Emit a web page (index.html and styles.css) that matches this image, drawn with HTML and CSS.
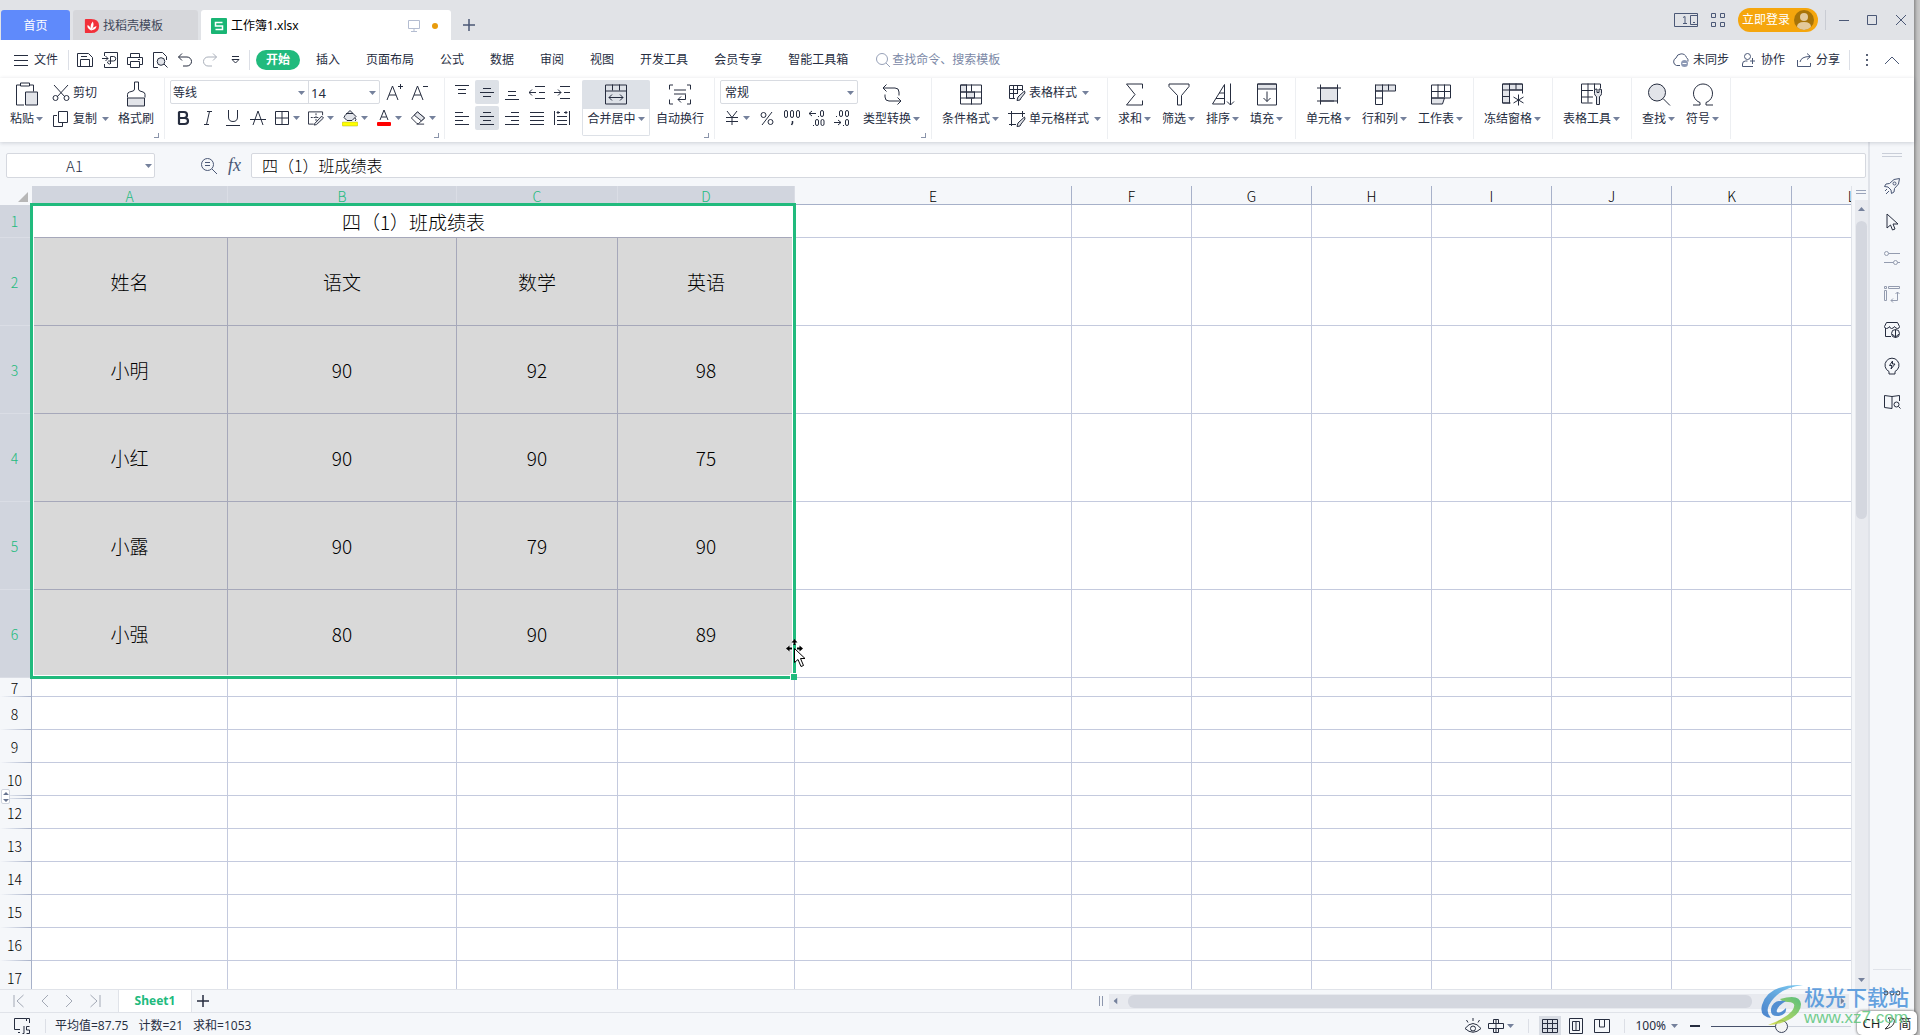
FILE: index.html
```html
<!DOCTYPE html>
<html lang="zh-CN">
<head>
<meta charset="utf-8">
<title>工作簿1.xlsx</title>
<link rel="stylesheet" href="styles.css">
</head>
<body>
<svg class="sprite" aria-hidden="true">
  <symbol id="caret" viewBox="0 0 7 4"><path d="M0 0h7L3.500 4z" fill="currentColor" stroke="none"/></symbol>
  <symbol id="menu" viewBox="0 0 16 16"><path d="M1 3.500h14M1 8.500h14M1 13.500h14"/></symbol>
  <symbol id="save" viewBox="0 0 16 16"><path d="M.5 1.500h11l4 4v9H.5zM3.500 14v-6.500h9V14M4 4.500h6"/></symbol>
  <symbol id="export" viewBox="0 0 16 16"><path d="M2.500 4V.5h13v15h-13V12M0 6.500h6M3.500 4 6 6.500 3.500 9M8.500 12V4.500h3a2 2 0 0 1 0 4.500H6.500a1.500 1.500 0 1 0 2 2"/></symbol>
  <symbol id="print" viewBox="0 0 16 16"><path d="M3.500 5V1.500h9V5M3.500 12.500h-3v-7h15v7h-3M3.500 9.500h9v6h-9zM11 7.500h2"/></symbol>
  <symbol id="preview" viewBox="0 0 16 16"><path d="M6 15.500H1.500V.5h9l4 4V8"/><circle cx="9" cy="9.500" r="3.800" fill="#e2e4e9"/><path d="m12 12 3.500 3.500"/></symbol>
  <symbol id="undo" viewBox="0 0 16 16"><path d="M5 1.500 1.500 5 5 8.500M1.500 5H10a4.500 4.500 0 0 1 0 9H6"/></symbol>
  <symbol id="redo" viewBox="0 0 16 16"><path d="M11 1.500 14.500 5 11 8.500M14.500 5H6a4.500 4.500 0 0 0 0 9h4"/></symbol>
  <symbol id="more" viewBox="0 0 9 8"><path d="M1 .5h7M1 3.500h7L4.500 7z"/></symbol>
  <symbol id="search" viewBox="0 0 16 16"><circle cx="7" cy="7" r="5.500"/><path d="m11 11 4 4"/></symbol>
  <symbol id="paste" viewBox="0 0 22 24"><path d="M8 22.500H.5v-20h4M13.500 2.500h4V9M4.500.5h9v3h-9z"/><path d="M9.500 9.500h12v13h-12z" fill="#e2e4e9"/></symbol>
  <symbol id="cut" viewBox="0 0 18 18"><path d="m2 1 11 12M16 1 5 13"/><circle cx="3.500" cy="14" r="2.500"/><circle cx="14.500" cy="14" r="2.500"/></symbol>
  <symbol id="copy" viewBox="0 0 18 18"><path d="M5 5.500H1.500v11h9V13M6.500 1.500h9v11h-9z"/></symbol>
  <symbol id="brush" viewBox="0 0 20 26"><path d="M1.500 16v-3q0-2 2-2.500l3.500-1q1.500-.5 1.500-2V.5h4v7q0 1.500 1.500 2l3 1q2 .5 2 2.500v3"/><path d="M1.500 16.500h17v8h-17z" fill="#e2e4e9"/></symbol>
  <symbol id="biga" viewBox="0 0 18 18"><path d="M1 17 6.500 3 12 17M3 12h7M14.500 1v5M12 3.500h5"/></symbol>
  <symbol id="smalla" viewBox="0 0 18 18"><path d="M1 17 6.500 3 12 17M3 12h7M12 3.500h5"/></symbol>
  <symbol id="bold" viewBox="0 0 16 16"><path d="M4 2v12M3.500 2H9q3 0 3 3t-3 3H4h5.500q3.500 0 3.500 3t-3.500 3h-6" stroke-width="2.200"/></symbol>
  <symbol id="italic" viewBox="0 0 16 16"><path d="M7 1.500h5M4 14.500h5M9.500 1.500l-3 13"/></symbol>
  <symbol id="under" viewBox="0 0 16 16"><path d="M3.500 0v7q0 4.500 4.500 4.500T12.500 7V0M1 15.500h14"/></symbol>
  <symbol id="strike" viewBox="0 0 16 16"><path d="M3 15 8 1l5 14M0 9.500h16"/></symbol>
  <symbol id="borders" viewBox="0 0 16 16"><path d="M1.500 1.500h13v13h-13zM8 1v14M1 8h14"/></symbol>
  <symbol id="drawb" viewBox="0 0 17 16"><path d="M15.500 5V1.500h-15v13H6"/><path d="M8.500 3v8M3 7.500h8" stroke-dasharray="2 1"/><path d="m7 14 7.500-8 2 2L9 15l-2.500.5z" fill="#e2e4e9"/></symbol>
  <symbol id="fill" viewBox="0 0 16 18"><path d="M3 6.500 8 1.500l6 6-4 4H5l-3-3z" fill="#e2e4e9"/><path d="M4 4.500h7M13 9q2 2 0 3"/><rect y="13" width="16" height="4" rx="1" fill="#ff0" stroke="#a9a93a" stroke-width=".5"/></symbol>
  <symbol id="color" viewBox="0 0 16 18"><path d="m4 11 4-10 4 10M5.500 8h5"/><rect x="1" y="13" width="14" height="4" rx="1" fill="#f00" stroke="none"/></symbol>
  <symbol id="eraser" viewBox="0 0 17 16"><path d="M8 1.500 1.500 8l6 6H9l6.500-6z"/><path d="M8 1.500 15.500 8 12 11 4.500 5z" fill="#e2e4e9"/><path d="M7 14.500h8"/></symbol>
  <symbol id="vtop" viewBox="0 0 16 16"><path d="M1 1.500h14M4 5.500h8M4 9.500h8"/></symbol>
  <symbol id="vmid" viewBox="0 0 16 16"><path d="M4 4.500h8M1 8.500h14M4 12.500h8"/></symbol>
  <symbol id="vbot" viewBox="0 0 16 16"><path d="M4 7.500h8M4 11.500h8M1 15.500h14"/></symbol>
  <symbol id="outdent" viewBox="0 0 16 16"><path d="M6 2.500h10M10 8.500h6M6 14.500h10M0 8.500h7M3 5.500l-3 3 3 3"/></symbol>
  <symbol id="indent" viewBox="0 0 16 16"><path d="M6 2.500h10M10 8.500h6M6 14.500h10M0 8.500h7M4 5.500l3 3-3 3"/></symbol>
  <symbol id="left" viewBox="0 0 16 16"><path d="M1 2.500h8M1 6.500h14M1 10.500h8M1 14.500h14"/></symbol>
  <symbol id="center" viewBox="0 0 16 16"><path d="M4 2.500h8M1 6.500h14M4 10.500h8M1 14.500h14"/></symbol>
  <symbol id="right" viewBox="0 0 16 16"><path d="M7 2.500h8M1 6.500h14M7 10.500h8M1 14.500h14"/></symbol>
  <symbol id="justify" viewBox="0 0 16 16"><path d="M1 2.500h14M1 6.500h14M1 10.500h14M1 14.500h14"/></symbol>
  <symbol id="distribute" viewBox="0 0 16 16"><path d="M.5 1v14M15.500 1v14M3 6.500h10M3 10.500h10M3 14.500h10M3 2.500h3M10 2.500h3M4.500 1 3 2.500 4.500 4M11.500 1 13 2.500 11.500 4"/></symbol>
  <symbol id="merge" viewBox="0 0 24 22"><path d="M1.500 1.500h21v19h-21zM1 7.500h22M8.500 1v6M15.500 1v6M5 14h14M8 11l-3 3 3 3M16 11l3 3-3 3"/></symbol>
  <symbol id="wrap" viewBox="0 0 24 22"><path d="M5 1.500H1.500V6M19 1.500h3.500V6M1.500 16v4.500H5M22.500 16v4.500H19M6 6.500h12M6 10.500h12M17.500 11v5H10M13 13l-3 3 3 3"/></symbol>
  <symbol id="yuan" viewBox="0 0 16 16"><path d="m3 1 5 6.500L13 1M8 7v8M2 7.500h12M2 11.500h12"/></symbol>
  <symbol id="percent" viewBox="0 0 16 16"><circle cx="4.500" cy="5" r="2.500"/><circle cx="11.500" cy="12" r="2.500"/><path d="M13 2 3 15"/></symbol>
  <symbol id="thousand" viewBox="0 0 18 18"><rect x="1.500" y="1.500" width="3" height="7" rx="1.500"/><rect x="7.500" y="1.500" width="3" height="7" rx="1.500"/><rect x="13.500" y="1.500" width="3" height="7" rx="1.500"/><path d="M9.500 12v2l-1 2" stroke-width="1.500"/></symbol>
  <symbol id="lessdec" viewBox="0 0 18 18"><path d="M1 4.500h7M4 2 1 4.500 4 7M10 7.500h1M5 16.500h1"/><rect x="12.500" y="1.500" width="3" height="6" rx="1.500"/><rect x="7.500" y="10.500" width="3" height="6" rx="1.500"/><rect x="13" y="10.500" width="3" height="6" rx="1.500"/></symbol>
  <symbol id="moredec" viewBox="0 0 18 18"><path d="M1 13.500h7M5 11l3 2.500L5 16M3 7.500h1M10 16.500h1"/><rect x="6.500" y="1.500" width="3" height="6" rx="1.500"/><rect x="12.500" y="1.500" width="3" height="6" rx="1.500"/><rect x="12.500" y="10.500" width="3" height="6" rx="1.500"/></symbol>
  <symbol id="convert" viewBox="0 0 22 24"><path d="M2 5.500h12q4 0 4 4V13M5.500 2 2 5.500 5.500 9M20 18.500H8q-4 0-4-4V12M16.500 15l3.500 3.500-3.500 3.500"/></symbol>
  <symbol id="cond" viewBox="0 0 24 22"><path d="M1.500 1.500h6v7h-6zM7.500 8.500h8v6h-8z" fill="#e2e4e9"/><path d="M1.500 1.500h21v19h-21zM1 8.500h22M1 14.500h22M7.500 1v14M15.500 8v6M12.500 1v7M12.500 15v6"/></symbol>
  <symbol id="tstyle" viewBox="0 0 18 18"><path d="M14.500 7V1.500H1.500v13H7M1 5.500h14M1 9.500h9M5.500 1v13M9.500 1v9"/><path d="M16.500 7 11 12l-1 1-1 3.500 3-.5 1-2 4-5z" fill="#e2e4e9"/></symbol>
  <symbol id="cstyle" viewBox="0 0 18 18"><path d="M3.500 1v15M0 3.500h17M14.500 1v6M1 14.500h7"/><path d="M16.500 7 11 12l-1 1-1 3.500 3-.5 1-2 4-5z" fill="#e2e4e9"/></symbol>
  <symbol id="sum" viewBox="0 0 22 24"><path d="M18.500 6V1.500h-16L11 12l-8.500 10.500h16V18"/></symbol>
  <symbol id="filter" viewBox="0 0 22 24"><path d="M1 1.500h20V4l-7.500 9v9.500h-4V13L1 4z"/></symbol>
  <symbol id="sort" viewBox="0 0 24 24"><path d="M1.500 21.500 13.500 2v19.500zM5 16h8.500M8 10.500h5.500M19.500 1v21.500M16 19l3.500 3.500L23 19"/></symbol>
  <symbol id="fillin" viewBox="0 0 22 24"><path d="M1.500 1.500h19v5h-19z" fill="#e2e4e9"/><path d="M1.500 1.500h19v21h-19zM11 9v10M7.500 15.500 11 19l3.500-3.500"/></symbol>
  <symbol id="cells" viewBox="0 0 24 22"><path d="M3.500 4.500h17v13h-17z" fill="#e2e4e9"/><path d="M3.500 1v20M20.500 1v14M0 4.500h24M0 17.500h17M20.500 17v3"/></symbol>
  <symbol id="rowcol" viewBox="0 0 22 22"><path d="M1.500 1.500h20v6h-20z" fill="#e2e4e9"/><path d="M8.500 1v20h-7v-20M14.500 1v6M1 7.500h7M1 14.500h7"/></symbol>
  <symbol id="sheet" viewBox="0 0 22 22"><path d="M1.500 14.500h13l-2 6h-11z" fill="#e2e4e9"/><path d="M1.500 20V1.500h19v13h-19M1 8h19M8 1v13M14.500 1v13"/></symbol>
  <symbol id="freeze" viewBox="0 0 24 24"><path d="M1.500 1.500h20v6h-13v13h-7z" fill="#e2e4e9"/><path d="M21.500 11V1.500h-20v19h8M1 7.500h20M1 14h8M8.500 1v20M15 1v6M17.500 12v11M12.500 14.500l10 6M22.500 14.500l-10 6"/></symbol>
  <symbol id="ttool" viewBox="0 0 24 24"><path d="M20.500 6V1.500h-19v19h11M1 8h12M1 14.500h12M8 1v19M14.500 1v6"/><path d="M14.500 7v4q0 2 2 3v8h3v-8q2-1 2-3V7l-2.500-.5V10h-2V6.500z" fill="#e2e4e9"/></symbol>
  <symbol id="find" viewBox="0 0 24 24"><circle cx="10" cy="10" r="8.500" fill="#e2e4e9"/><path d="m16 16 7 7"/></symbol>
  <symbol id="omega" viewBox="0 0 24 24"><path d="M2 22.500h7V20a9.500 9.500 0 1 1 6 0v2.500h7"/></symbol>
  <symbol id="cloud" viewBox="0 0 18 16"><path d="M8 13.500H4.500a4 4 0 0 1-.5-7.500 5.500 5.500 0 0 1 10.500-.5 4 4 0 0 1 1.500 4"/><circle cx="12.500" cy="11.500" r="3.500" fill="#8e9ab5" stroke="none"/><path d="M10.500 11.500h4" stroke="#fff"/></symbol>
  <symbol id="person" viewBox="0 0 16 16"><circle cx="6.500" cy="4.500" r="3"/><path d="M12 14.500H1.500V12q0-3 3-3h2M11.500 6v6M9 9h5"/></symbol>
  <symbol id="share" viewBox="0 0 16 16"><path d="M1.500 8v6.500h13V11M4 10q1-5.500 10-5.500M11 1.500l3.500 3-3.500 3"/></symbol>
  <symbol id="chevup" viewBox="0 0 16 10"><path d="m1 9 7-7 7 7"/></symbol>
  <symbol id="zoomf" viewBox="0 0 18 18"><circle cx="7.500" cy="7.500" r="6"/><path d="M5 5.500h5M5 8.500h5M12 12l5 5"/></symbol>
  <symbol id="chl" viewBox="0 0 8 14"><path d="M7 1 1 7l6 6"/></symbol>
  <symbol id="chr" viewBox="0 0 8 14"><path d="m1 1 6 6-6 6"/></symbol>
  <symbol id="chfirst" viewBox="0 0 12 14"><path d="M1 1v12M10.500 1 4 7l6.500 6"/></symbol>
  <symbol id="chlast" viewBox="0 0 12 14"><path d="M11 1v12M1.500 1 8 7l-6.500 6"/></symbol>
  <symbol id="plus" viewBox="0 0 14 14"><path d="M7 1v12M1 7h12" stroke-width="1.500"/></symbol>
  <symbol id="rocket" viewBox="0 0 18 18"><path d="M16.500 1.500q-6-.5-10 5L3 7 1.500 9.500 5 10l3 3 .5 3.500L11 15l.5-3.500q5.500-4 5-10zM4 12l-2 2M6 14l-3 3"/><circle cx="11.500" cy="6.500" r="1.500"/></symbol>
  <symbol id="arrow" viewBox="0 0 18 18"><path d="M4 1v14l3.500-3 2 5 2.500-1-2-5h5z"/></symbol>
  <symbol id="sliders" viewBox="0 0 18 18"><circle cx="3.500" cy="4.500" r="2"/><circle cx="12.500" cy="13.500" r="2"/><path d="M5.500 4.500H17M1 13.500h9.500M14.500 13.500H17"/></symbol>
  <symbol id="pane" viewBox="0 0 18 18"><path d="M1.500 1.500h2v2h-2zM5.500 1.500h11v2h-11zM1.500 5.500h2v10h-2zM14.500 7v8.500H8M12.500 9l2-2 2 2M10 13.500l-2 2 2 2"/></symbol>
  <symbol id="store" viewBox="0 0 18 18"><path d="M2.500 7v8.500H8M3.500 1.500h11l2 4q0 2-2 2t-3-2q-1 2-3 2-1.500 0-2-2-1 2-3 2-2 0-2-2z"/><circle cx="12.500" cy="12.500" r="4"/><path d="M12.500 8.500v8M9 13l3.500 3 3.500-3"/></symbol>
  <symbol id="bulb" viewBox="0 0 18 18"><path d="M6 14.500a7 7 0 1 1 6 0v2.500H6zM9.500 4 6.500 8.500H9L8 12l4-5H9.500z"/></symbol>
  <symbol id="book" viewBox="0 0 18 18"><path d="M9 3.500 1.500 2.500v12L9 15.500V3.500l7.500-1V8"/><circle cx="13.500" cy="11.500" r="2.500"/><path d="m15.500 13.500 2 2"/></symbol>
  <symbol id="eye" viewBox="0 0 18 18"><circle cx="9" cy="11.500" r="2.500"/><path d="M1 11.500Q9 1.500 17 11.500 9 19 1 11.500zM9 4V1M4 5.500 2.500 3M14 5.500 15.500 3"/></symbol>
  <symbol id="cross" viewBox="0 0 16 16"><path d="M5.500 5.500v-4h5v4M5.500 10.500v4h5v-4M.5 5.500h15v5H.5zM8 2v12"/></symbol>
  <symbol id="gridv" viewBox="0 0 16 16"><path d="M.5 1.500h15v13H.5zM0 5.500h16M0 10.500h16M5.500 1v14M10.500 1v14"/></symbol>
  <symbol id="pagev" viewBox="0 0 16 16"><path d="M1.500.5h13v15h-13zM4.500 3.500h7v9h-7zM8 3v10"/></symbol>
  <symbol id="breakv" viewBox="0 0 16 16"><path d="M.5 1.500h15v13H.5zM5.500 1v8h5M10.500 1v8"/></symbol>
  <symbol id="macro" viewBox="0 0 18 18"><path d="M7 12.500H1.500v-11h12M5 15.500h2M13.500 4V1.500h3V6M9.500 16.500h1.500V9M16.500 9.500h-3V13h3v3.500h-3"/></symbol>
</svg>

<div class="window">
  <header class="titlebar">
    <nav class="tabs" aria-label="文档标签">
      <button class="tab home">首页</button>
      <button class="tab templates">
        <svg class="logo" viewBox="0 0 16 18"><path d="M1 1h6q9 0 9 8t-9 8H1Q0 17 0 16V2q0-1 1-1z" fill="#f2303a"/><path d="M7 14Q2 12 3 8q3 1 4 6Q5 8 9 4q2 5-2 10 2-4 6-5 0 4-6 5z" fill="#fff"/></svg>
        找稻壳模板
      </button>
      <button class="tab active">
        <svg class="logo" viewBox="0 0 16 16"><rect width="16" height="16" rx="1" fill="#19b574"/><path d="M11.500 4.500h-7v3.500h7v3.500h-7" fill="none" stroke="#fff" stroke-width="1.500"/></svg>
        工作簿1.xlsx
        <svg class="ic monitor" viewBox="0 0 14 14"><path d="M1.500 1.500h11v8h-11zM7 9v4M4 12.500h6"/></svg>
        <span class="dot"></span>
      </button>
      <button class="newtab" aria-label="新建"><svg class="ic i14"><use href="#plus"/></svg></button>
    </nav>
    <div class="wincontrols">
      <button aria-label="窗口"><svg class="ic" width="24" height="14" viewBox="0 0 24 14"><path d="M.5.500h23v13H.5zM16.500 2.500h7v9h-7zM19 9.500h2M9 4.500l2-1v7M9 10.500h4"/></svg></button>
      <button class="apps" aria-label="应用"><svg class="ic" width="14" height="14" viewBox="0 0 14 14"><path d="M.5.500h4v4h-4zM9.500.500h4v4h-4zM.5 9.500h4v4h-4zM9.500 9.500h4v4h-4z"/></svg></button>
      <button class="login">立即登录<svg width="20" height="20" viewBox="0 0 20 20"><circle cx="10" cy="10" r="10" fill="#a87408"/><circle cx="10" cy="7" r="4" fill="#e3c99a"/><path d="M3 17q0-5 7-5t7 5q-3 3-7 3t-7-3z" fill="#e3c99a"/></svg></button>
      <span class="vline"></span>
      <button class="wbtn" aria-label="最小化"><svg class="ic" width="12" height="12" viewBox="0 0 12 12"><path d="M1 6.500h10"/></svg></button>
      <button class="wbtn" aria-label="最大化"><svg class="ic" width="12" height="12" viewBox="0 0 12 12"><path d="M1.500 1.500h9v9h-9z"/></svg></button>
      <button class="wbtn" aria-label="关闭"><svg class="ic" width="12" height="12" viewBox="0 0 12 12"><path d="m1 1 10 10M11 1 1 11"/></svg></button>
    </div>
  </header>

  <div class="menubar">
    <button class="file"><svg class="ic i16"><use href="#menu"/></svg>文件</button>
    <span class="vline"></span>
    <div class="quick">
      <button aria-label="保存"><svg class="ic i16"><use href="#save"/></svg></button>
      <button aria-label="输出为PDF"><svg class="ic i16"><use href="#export"/></svg></button>
      <button aria-label="打印"><svg class="ic i16"><use href="#print"/></svg></button>
      <button aria-label="打印预览"><svg class="ic i16"><use href="#preview"/></svg></button>
      <button aria-label="撤销"><svg class="ic i16"><use href="#undo"/></svg></button>
      <button aria-label="恢复" class="off"><svg class="ic i16"><use href="#redo"/></svg></button>
      <button aria-label="更多" class="qmore"><svg class="ic" width="9" height="8"><use href="#more"/></svg></button>
    </div>
    <span class="vline"></span>
    <nav class="menus">
      <button class="current">开始</button><button>插入</button><button>页面布局</button><button>公式</button><button>数据</button><button>审阅</button><button>视图</button><button>开发工具</button><button>会员专享</button><button>智能工具箱</button>
    </nav>
    <label class="find"><svg class="ic i16"><use href="#search"/></svg><input type="text" placeholder="查找命令、搜索模板" aria-label="查找命令、搜索模板"></label>
    <div class="menuright">
      <button class="sync"><svg class="ic" width="18" height="16"><use href="#cloud"/></svg>未同步</button>
      <button><svg class="ic i16"><use href="#person"/></svg>协作</button>
      <button><svg class="ic i16"><use href="#share"/></svg>分享</button>
      <span class="vline"></span>
      <button class="dots" aria-label="更多"><svg width="2" height="12" viewBox="0 0 2 12"><path d="M0 0h2v2H0zM0 5h2v2H0zM0 10h2v2H0z" fill="#5a6377"/></svg></button>
      <button class="dots" aria-label="收起"><svg class="ic" width="16" height="10"><use href="#chevup"/></svg></button>
    </div>
  </div>

  <div class="ribbon">
    <section class="group g-clip">
      <button class="big"><svg class="ic" width="22" height="24"><use href="#paste"/></svg><span>粘贴<svg class="caret"><use href="#caret"/></svg></span></button>
      <div class="rows">
        <button class="item"><svg class="ic i18"><use href="#cut"/></svg>剪切</button>
        <button class="item"><svg class="ic i18"><use href="#copy"/></svg>复制<svg class="caret wide"><use href="#caret"/></svg></button>
      </div>
      <button class="big"><svg class="ic" width="20" height="26"><use href="#brush"/></svg><span>格式刷</span></button>
      <span class="launcher"></span>
    </section>
    <section class="group g-font">
      <div class="rows">
        <div class="row">
          <div class="combos">
            <div class="combo font"><select aria-label="字体"><option>等线</option></select><svg class="caret"><use href="#caret"/></svg></div>
            <div class="combo size"><select aria-label="字号"><option>14</option></select><svg class="caret"><use href="#caret"/></svg></div>
          </div>
          <button class="tool" aria-label="增大字号"><svg class="ic i18"><use href="#biga"/></svg></button>
          <button class="tool" aria-label="减小字号"><svg class="ic i18"><use href="#smalla"/></svg></button>
        </div>
        <div class="row">
          <button class="tool" aria-label="加粗"><svg class="ic i16"><use href="#bold"/></svg></button>
          <button class="tool" aria-label="倾斜"><svg class="ic i16"><use href="#italic"/></svg></button>
          <button class="tool" aria-label="下划线"><svg class="ic i16"><use href="#under"/></svg></button>
          <button class="tool" aria-label="删除线"><svg class="ic i16"><use href="#strike"/></svg></button>
          <button class="drop" aria-label="边框"><svg class="ic i16"><use href="#borders"/></svg><svg class="caret"><use href="#caret"/></svg></button>
          <button class="drop" aria-label="绘图边框"><svg class="ic i16"><use href="#drawb"/></svg><svg class="caret"><use href="#caret"/></svg></button>
          <button class="drop" aria-label="填充颜色"><svg class="ic" width="16" height="18"><use href="#fill"/></svg><svg class="caret"><use href="#caret"/></svg></button>
          <button class="drop" aria-label="字体颜色"><svg class="ic" width="16" height="18"><use href="#color"/></svg><svg class="caret"><use href="#caret"/></svg></button>
          <button class="drop" aria-label="清除"><svg class="ic i16"><use href="#eraser"/></svg><svg class="caret"><use href="#caret"/></svg></button>
        </div>
      </div>
      <span class="launcher"></span>
    </section>
    <section class="group g-align">
      <div class="aligns">
        <button aria-label="顶端对齐"><svg class="ic i16"><use href="#vtop"/></svg></button>
        <button aria-label="垂直居中" class="on"><svg class="ic i16"><use href="#vmid"/></svg></button>
        <button aria-label="底端对齐"><svg class="ic i16"><use href="#vbot"/></svg></button>
        <button aria-label="减少缩进"><svg class="ic i16"><use href="#outdent"/></svg></button>
        <button aria-label="增加缩进"><svg class="ic i16"><use href="#indent"/></svg></button>
        <button aria-label="左对齐"><svg class="ic i16"><use href="#left"/></svg></button>
        <button aria-label="水平居中" class="on"><svg class="ic i16"><use href="#center"/></svg></button>
        <button aria-label="右对齐"><svg class="ic i16"><use href="#right"/></svg></button>
        <button aria-label="两端对齐"><svg class="ic i16"><use href="#justify"/></svg></button>
        <button aria-label="分散对齐"><svg class="ic i16"><use href="#distribute"/></svg></button>
      </div>
      <button class="big merge"><svg class="ic" width="24" height="22"><use href="#merge"/></svg><span>合并居中<svg class="caret"><use href="#caret"/></svg></span></button>
      <button class="big"><svg class="ic" width="24" height="22"><use href="#wrap"/></svg><span>自动换行</span></button>
      <span class="launcher"></span>
    </section>
    <section class="group g-num">
      <div class="rows">
        <div class="combos"><div class="combo num"><select aria-label="数字格式"><option>常规</option></select><svg class="caret"><use href="#caret"/></svg></div></div>
        <div class="row">
          <button class="drop" aria-label="货币"><svg class="ic i16"><use href="#yuan"/></svg><svg class="caret"><use href="#caret"/></svg></button>
          <button class="tool" aria-label="百分比"><svg class="ic i16"><use href="#percent"/></svg></button>
          <button class="tool" aria-label="千位分隔"><svg class="ic i18"><use href="#thousand"/></svg></button>
          <button class="tool" aria-label="增加小数位"><svg class="ic i18"><use href="#lessdec"/></svg></button>
          <button class="tool" aria-label="减少小数位"><svg class="ic i18"><use href="#moredec"/></svg></button>
        </div>
      </div>
      <button class="big"><svg class="ic" width="22" height="24"><use href="#convert"/></svg><span>类型转换<svg class="caret"><use href="#caret"/></svg></span></button>
      <span class="launcher"></span>
    </section>
    <section class="group g-style">
      <button class="big"><svg class="ic" width="24" height="22"><use href="#cond"/></svg><span>条件格式<svg class="caret"><use href="#caret"/></svg></span></button>
      <div class="rows">
        <button class="item"><svg class="ic i18"><use href="#tstyle"/></svg>表格样式<svg class="caret wide"><use href="#caret"/></svg></button>
        <button class="item"><svg class="ic i18"><use href="#cstyle"/></svg>单元格样式<svg class="caret wide"><use href="#caret"/></svg></button>
      </div>
    </section>
    <section class="group g-edit">
      <button class="big"><svg class="ic" width="22" height="24"><use href="#sum"/></svg><span>求和<svg class="caret"><use href="#caret"/></svg></span></button>
      <button class="big"><svg class="ic" width="22" height="24"><use href="#filter"/></svg><span>筛选<svg class="caret"><use href="#caret"/></svg></span></button>
      <button class="big"><svg class="ic" width="24" height="24"><use href="#sort"/></svg><span>排序<svg class="caret"><use href="#caret"/></svg></span></button>
      <button class="big"><svg class="ic" width="22" height="24"><use href="#fillin"/></svg><span>填充<svg class="caret"><use href="#caret"/></svg></span></button>
    </section>
    <section class="group g-cells">
      <button class="big"><svg class="ic" width="24" height="22"><use href="#cells"/></svg><span>单元格<svg class="caret"><use href="#caret"/></svg></span></button>
      <button class="big"><svg class="ic" width="22" height="22"><use href="#rowcol"/></svg><span>行和列<svg class="caret"><use href="#caret"/></svg></span></button>
      <button class="big"><svg class="ic" width="22" height="22"><use href="#sheet"/></svg><span>工作表<svg class="caret"><use href="#caret"/></svg></span></button>
    </section>
    <section class="group g-one"><button class="big"><svg class="ic" width="24" height="24"><use href="#freeze"/></svg><span>冻结窗格<svg class="caret"><use href="#caret"/></svg></span></button></section>
    <section class="group g-one"><button class="big"><svg class="ic" width="24" height="24"><use href="#ttool"/></svg><span>表格工具<svg class="caret"><use href="#caret"/></svg></span></button></section>
    <section class="group g-find">
      <button class="big"><svg class="ic" width="24" height="24"><use href="#find"/></svg><span>查找<svg class="caret"><use href="#caret"/></svg></span></button>
      <button class="big"><svg class="ic" width="24" height="24"><use href="#omega"/></svg><span>符号<svg class="caret"><use href="#caret"/></svg></span></button>
    </section>
  </div>

  <div class="body">
    <main class="work">
      <div class="formula">
        <div class="namebox"><input type="text" value="A1" aria-label="名称框"><svg class="caret"><use href="#caret"/></svg></div>
        <button class="fzoom" aria-label="浏览公式"><svg class="ic i18"><use href="#zoomf"/></svg></button>
        <button class="fx">fx</button>
        <input class="fbox" type="text" value="四（1）班成绩表" aria-label="编辑栏">
      </div>
      <div class="sheetarea">
        <div class="gridwrap">
          <table class="grid">
            <colgroup><col class="c-head"><col class="c-a"><col class="c-b"><col class="c-c"><col class="c-d"><col class="c-e"><col><col><col><col><col><col><col></colgroup>
            <thead><tr><th class="corner"><svg width="10" height="10" viewBox="0 0 10 10"><path d="M10 0v10H0z" fill="#b7b7b7"/></svg></th><th class="sel">A</th><th class="sel">B</th><th class="sel">C</th><th class="sel">D</th><th>E</th><th>F</th><th>G</th><th>H</th><th>I</th><th>J</th><th>K</th><th>L</th></tr></thead>
            <tbody>
              <tr><th class="sel">1</th><td class="title" colspan="4">四（1）班成绩表</td><td></td><td></td><td></td><td></td><td></td><td></td><td></td><td></td></tr>
              <tr class="tall"><th class="sel">2</th><td>姓名</td><td>语文</td><td>数学</td><td>英语</td><td></td><td></td><td></td><td></td><td></td><td></td><td></td><td></td></tr>
              <tr class="tall"><th class="sel">3</th><td>小明</td><td>90</td><td>92</td><td>98</td><td></td><td></td><td></td><td></td><td></td><td></td><td></td><td></td></tr>
              <tr class="tall"><th class="sel">4</th><td>小红</td><td>90</td><td>90</td><td>75</td><td></td><td></td><td></td><td></td><td></td><td></td><td></td><td></td></tr>
              <tr class="tall"><th class="sel">5</th><td>小露</td><td>90</td><td>79</td><td>90</td><td></td><td></td><td></td><td></td><td></td><td></td><td></td><td></td></tr>
              <tr class="tall"><th class="sel">6</th><td>小强</td><td>80</td><td>90</td><td>89</td><td></td><td></td><td></td><td></td><td></td><td></td><td></td><td></td></tr>
              <tr class="short"><th>7</th><td></td><td></td><td></td><td></td><td></td><td></td><td></td><td></td><td></td><td></td><td></td><td></td></tr>
              <tr><th>8</th><td></td><td></td><td></td><td></td><td></td><td></td><td></td><td></td><td></td><td></td><td></td><td></td></tr>
              <tr><th>9</th><td></td><td></td><td></td><td></td><td></td><td></td><td></td><td></td><td></td><td></td><td></td><td></td></tr>
              <tr><th>10</th><td></td><td></td><td></td><td></td><td></td><td></td><td></td><td></td><td></td><td></td><td></td><td></td></tr>
              <tr><th class="afterhidden">12</th><td></td><td></td><td></td><td></td><td></td><td></td><td></td><td></td><td></td><td></td><td></td><td></td></tr>
              <tr><th>13</th><td></td><td></td><td></td><td></td><td></td><td></td><td></td><td></td><td></td><td></td><td></td><td></td></tr>
              <tr><th>14</th><td></td><td></td><td></td><td></td><td></td><td></td><td></td><td></td><td></td><td></td><td></td><td></td></tr>
              <tr><th>15</th><td></td><td></td><td></td><td></td><td></td><td></td><td></td><td></td><td></td><td></td><td></td><td></td></tr>
              <tr><th>16</th><td></td><td></td><td></td><td></td><td></td><td></td><td></td><td></td><td></td><td></td><td></td><td></td></tr>
              <tr><th>17</th><td></td><td></td><td></td><td></td><td></td><td></td><td></td><td></td><td></td><td></td><td></td><td></td></tr>
            </tbody>
          </table>
          <div class="selection"><span class="handle"></span></div>
          <button class="unhide" aria-label="展开隐藏行"><svg width="6" height="10" viewBox="0 0 6 10"><path d="M3 0l3 3H0zM0 7h6L3 10z" fill="#66738f"/></svg></button>
          <svg class="pointer" width="22" height="30" viewBox="0 0 22 30"><path d="M9.500 2v4M2 10.500h5M12 10.500h5" fill="none" stroke="#fff" stroke-width="4"/><path d="M9.500 3v4M3 10.500h4M12 10.500h4" fill="none" stroke="#000" stroke-width="2"/><path d="M9.500 1l3 3.500h-6zM1 10.500l3.500-3v6zM18 10.500l-3.500-3v6z"/><path d="M9.500 10.500v14l3.500-3 3 7 2.500-1-3-7h4.500z" fill="#fff" stroke="#000"/></svg>
        </div>
        <div class="vscroll">
          <span class="split"></span>
          <div class="vtrack"><svg class="caret up"><use href="#caret"/></svg><span class="vthumb"></span><svg class="caret down"><use href="#caret"/></svg></div>
        </div>
      </div>
      <div class="sheetbar">
        <div class="sheetnav">
          <button aria-label="第一个"><svg class="ic" width="12" height="14"><use href="#chfirst"/></svg></button>
          <button aria-label="上一个"><svg class="ic" width="8" height="14"><use href="#chl"/></svg></button>
          <button aria-label="下一个"><svg class="ic" width="8" height="14"><use href="#chr"/></svg></button>
          <button aria-label="最后一个"><svg class="ic" width="12" height="14"><use href="#chlast"/></svg></button>
        </div>
        <button class="sheettab">Sheet1</button>
        <button class="addsheet" aria-label="新建工作表"><svg class="ic i14"><use href="#plus"/></svg></button>
        <span class="grip"></span>
        <div class="htrack"><svg class="caret lft"><use href="#caret"/></svg><span class="hthumb"></span><svg class="caret rgt"><use href="#caret"/></svg></div>
      </div>
    </main>
    <aside class="side">
      <span class="sgrip"></span>
      <button aria-label="推荐" class="blue"><svg class="ic i18"><use href="#rocket"/></svg></button>
      <button aria-label="选择"><svg class="ic i18"><use href="#arrow"/></svg></button>
      <button aria-label="属性" class="dim"><svg class="ic i18"><use href="#sliders"/></svg></button>
      <button aria-label="透视" class="dim"><svg class="ic i18"><use href="#pane"/></svg></button>
      <button aria-label="素材"><svg class="ic i18"><use href="#store"/></svg></button>
      <button aria-label="分析"><svg class="ic i18"><use href="#bulb"/></svg></button>
      <button aria-label="帮助"><svg class="ic i18"><use href="#book"/></svg></button>
      <button class="sidemore" aria-label="更多"><svg class="ic" width="18" height="6" viewBox="0 0 18 6"><circle cx="3" cy="3" r="2"/><circle cx="9" cy="3" r="2"/><circle cx="15" cy="3" r="2"/></svg></button>
    </aside>
  </div>

  <footer class="status">
    <button class="macro" aria-label="宏"><svg class="ic i18"><use href="#macro"/></svg></button>
    <span class="vline"></span>
    <p class="stats"><span>平均值=87.75</span><span>计数=21</span><span>求和=1053</span></p>
    <div class="views">
      <button aria-label="护眼模式"><svg class="ic i18"><use href="#eye"/></svg></button>
      <button class="cross" aria-label="阅读模式"><svg class="ic i16"><use href="#cross"/></svg><svg class="caret"><use href="#caret"/></svg></button>
      <span class="vline"></span>
      <button class="view on" aria-label="普通视图"><svg class="ic i16"><use href="#gridv"/></svg></button>
      <button class="view" aria-label="页面布局"><svg class="ic i16"><use href="#pagev"/></svg></button>
      <button class="view" aria-label="分页预览"><svg class="ic i16"><use href="#breakv"/></svg></button>
      <span class="vline"></span>
      <button class="pct">100%<svg class="caret"><use href="#caret"/></svg></button>
      <button class="minus" aria-label="缩小"><span></span></button>
      <input class="zoom" type="range" min="0" max="100" value="50" aria-label="缩放">
    </div>
  </footer>
</div>
<div class="desktop"></div>

<div class="ime"><span>CH</span><svg width="12" height="14" viewBox="0 0 12 14"><path d="M5 2q8-1 6 5-2 5-9 6 5-4 5-7 0-3-2-4z" fill="none" stroke="#333"/></svg><span>简</span></div>
<div class="watermark">
  <svg width="44" height="42" viewBox="0 0 44 42"><defs><linearGradient id="wb" x1="0" y1="1" x2="1" y2="0"><stop offset="0" stop-color="#2f6fc4"/><stop offset="1" stop-color="#67c4f0"/></linearGradient><linearGradient id="wg" x1="0" y1="1" x2="1" y2="0"><stop offset="0" stop-color="#d7dc3a"/><stop offset="1" stop-color="#3fb86a"/></linearGradient></defs><path d="M43 1Q8 0 2 21q-3 12 9 13Q3 26 14 14 24 3 43 1z" fill="url(#wb)"/><path d="M20 15q20-6 21 5 0 12-20 19-6 2-13 2 18-7 24-14 6-9-4-9-6 0-8-3z" fill="url(#wg)"/><path d="M26 17q-13-2-15 8-1 8 8 7 8-2 7-8-6 6-9 4-2-4 9-11z" fill="#3a7fcc"/></svg>
  <div class="wtext"><strong>极光下载站</strong><span>www.xz7.com</span></div>
</div>
</body>
</html>
```
FILE: styles.css
```css
:root {
  --ink: #262d3f;
  --slate: #4b5876;
  --green: #21ba7d;
  --bar: #f5f7fa;
  --line: #e0e3e9;
  --gridline: #c4cade;
  --head: #d1d5de;
}
* { box-sizing: border-box; }
html, body { height: 100%; }
body {
  margin: 0;
  display: flex;
  overflow: hidden;
  position: relative;
  background: #fff;
  color: var(--ink);
  font: 12px/16px "Noto Sans", "Noto Sans CJK SC", sans-serif;
}
button, input, select { font: inherit; color: inherit; background: none; border: 0; padding: 0; margin: 0; outline: 0; border-radius: 0; }
button { display: flex; align-items: center; justify-content: center; white-space: nowrap; }
svg { display: block; flex: none; }
.sprite { position: absolute; width: 0; height: 0; }
.ic { fill: none; stroke: currentColor; stroke-width: 1; }
.i14 { width: 14px; height: 14px; }
.i16 { width: 16px; height: 16px; }
.i18 { width: 18px; height: 18px; }
.caret { width: 7px; height: 4px; color: #75819c; }
.vline { width: 1px; height: 20px; background: #dcdfe6; flex: none; }

.window { flex: 1; min-width: 0; display: flex; flex-direction: column; background: #fff; }
.desktop { width: 6px; flex: none; background: linear-gradient(90deg, #8d8d8d, #bdbdbd 3px, #c9c9c9); }

/* title bar */
.titlebar { height: 40px; flex: none; display: flex; justify-content: space-between; background: #e1e3e7; }
.tabs { display: flex; align-items: flex-end; padding-left: 1px; }
.tab { height: 30px; padding-top: 1px; border-radius: 3px 3px 0 0; }
.home { width: 69px; background: #5f8afb; color: #fff; }
.templates { width: 125px; margin: 0 3px; padding-left: 11px; gap: 3px; justify-content: flex-start; background: #d6d7db; color: #41485a; }
.tab.active { width: 250px; padding-left: 10px; padding-right: 13px; gap: 4px; justify-content: flex-start; background: #fff; color: #000; }
.logo { width: 16px; height: 16px; }
.monitor { width: 14px; height: 14px; margin-left: auto; color: #b4bdd1; }
.dot { width: 6px; height: 6px; margin-left: 7px; border-radius: 50%; background: #e89b0c; }
.newtab { width: 36px; height: 30px; color: var(--slate); }
.wincontrols { display: flex; align-items: center; color: var(--slate); padding-right: 7px; }
.apps { margin: 0 13px; }
.login { width: 80px; height: 24px; gap: 4px; border-radius: 12px; background: #f5a60d; color: #fff; }
.wincontrols .vline { margin: 0 12px 0 7px; background: #c9ccd3; }
.wbtn { width: 12px; margin-right: 16px; }
.wbtn + .wbtn { margin-right: 17px; }
.wbtn:last-child { margin-right: 0; }

/* menu bar */
.menubar { height: 38px; flex: none; display: flex; align-items: center; padding: 1px 0 0 13px; }
.file { gap: 5px; margin-right: 10px; }
.quick { display: flex; align-items: center; gap: 9px; padding: 0 9px 0 8px; }
.quick .off { color: #a9afba; }
.qmore { margin-left: 4px; }
.menus { display: flex; gap: 26px; margin-left: 6px; }
.current { width: 44px; height: 20px; margin-right: -10px; border-radius: 10px; background: var(--green); color: #fff; font-weight: 700; }
.find { display: flex; align-items: center; gap: 1px; margin-left: 27px; color: #97a1b8; }
.find input { width: 120px; }
.find input::placeholder { color: #7b88a6; opacity: 1; }
.menuright { display: flex; align-items: center; margin-left: auto; padding-right: 14px; gap: 11px; }
.menuright button { gap: 4px; }
.menuright .sync { gap: 3px; margin-right: 1px; }
.menuright .ic { color: var(--slate); }
.menuright .vline { margin-left: -2px; }
.menuright .dots { margin-left: 5px; }

/* ribbon */
.ribbon { height: 64px; flex: none; display: flex; box-shadow: 0 1px 4px rgba(60, 70, 90, .22); position: relative; z-index: 1; }
.group { position: relative; display: flex; flex: none; align-items: flex-start; height: 61px; padding: 2px 0 0 10px; gap: 11px; border-right: 1px solid #edeff2; }
.g-clip { width: 165px; gap: 9px; }
.g-font { width: 280px; padding-left: 5px; }
.g-align { width: 270px; padding-left: 5px; gap: 6px; }
.g-num { width: 217px; padding-left: 5px; gap: 5px; }
.g-style { width: 176px; gap: 9px; }
.g-edit { width: 188px; }
.g-cells { width: 178px; }
.g-one { width: 79px; }
.g-find { width: 99px; }
.launcher { position: absolute; right: 5px; bottom: 1px; width: 5px; height: 5px; border: solid #8a94aa; border-width: 0 1px 1px 0; }
.big { flex-direction: column; height: 56px; justify-content: flex-start; }
.big > .ic { height: 29px; }
.big span { display: flex; align-items: center; gap: 2px; height: 20px; }
.rows { display: flex; flex-direction: column; gap: 2px; }
.row { display: flex; height: 24px; }
.item { height: 24px; padding-top: 1px; gap: 3px; justify-content: flex-start; }
.item .wide { margin-left: 2px; }
.combos { display: flex; height: 24px; border: 1px solid #d8dbe1; border-radius: 2px; }
.combo { display: flex; align-items: center; padding: 1px 3px 0 4px; }
.combo select { flex: 1; min-width: 0; appearance: none; }
.combo + .combo { border-left: 1px solid #d8dbe1; padding-left: 2px; }
.combo.font { width: 137px; padding-left: 2px; }
.combo.size { width: 71px; }
.combo.size select { font-size: 13px; }
.combo.num { width: 136px; }
.combos + .tool { margin-left: 2px; }
.tool { width: 25px; height: 24px; }
.drop { width: 34px; height: 24px; gap: 3px; }
.aligns { display: grid; grid-template-columns: repeat(5, 24px); gap: 2px 1px; margin-right: 2px; }
.aligns button { height: 24px; border-radius: 2px; }
.aligns .on { background: #dde1e7; }
.merge { width: 68px; height: 56px; border: solid #dde1e7; border-width: 0 1px 1px; border-radius: 2px; background: #dde1e7; }
.merge span { width: 66px; height: 26px; justify-content: center; padding-bottom: 6px; background: #fff; }

/* body */
.body { flex: 1; min-height: 0; display: flex; background: var(--bar); }
.work { flex: 1; min-width: 0; display: flex; flex-direction: column; }
.formula { display: flex; flex: none; align-items: center; height: 44px; padding: 3px 2px 0 6px; }
.namebox { display: flex; align-items: center; width: 149px; height: 25px; padding-right: 2px; border: 1px solid #d5d8df; border-radius: 2px; background: #fff; }
.namebox input { flex: 1; min-width: 0; height: 21px; padding-right: 3px; text-align: center; font: 300 15px "Noto Sans CJK SC", sans-serif; }
.fzoom { margin-left: 45px; color: var(--slate); }
.fx { width: 33px; color: var(--slate); font: italic 18px "Liberation Serif", serif; }
.fbox { flex: 1; min-width: 0; height: 25px; padding: 0 10px 1px; border: 1px solid #d5d8df; border-radius: 2px; background: #fff; color: #000; font: 300 16px "Noto Sans CJK SC", sans-serif; }
.sheetarea { flex: 1; min-height: 0; display: flex; }
.gridwrap { flex: 1; min-width: 0; overflow: hidden; position: relative; background: #fff; border-right: 1px solid var(--line); }

.grid { width: 1911px; table-layout: fixed; border-collapse: separate; border-spacing: 0; font-family: "Noto Sans CJK SC", sans-serif; }
.grid col { width: 120px; }
.grid .c-head { width: 32px; }
.grid .c-a { width: 196px; }
.grid .c-b { width: 229px; }
.grid .c-c { width: 161px; }
.grid .c-d { width: 177px; }
.grid .c-e { width: 277px; }
.grid tr { height: 33px; }
.grid thead tr { height: 19px; }
.grid .tall { height: 88px; }
.grid .short { height: 19px; }
.grid th, .grid td { padding: 0; border: solid var(--gridline); border-width: 0 1px 1px 0; text-align: center; vertical-align: middle; }
.grid th { font-size: 14px; line-height: 16px; font-weight: 300; color: #000; background: var(--bar); border-color: #a7b1c9; }
.grid thead th { padding-top: 2px; }
.grid tbody th { padding-right: 2px; border-bottom: 0; background: linear-gradient(90deg, transparent, #a7b1c9) 0 100% / 100% 1px no-repeat var(--bar); }
.grid .sel, .grid tbody .sel { color: var(--green); background: var(--head); border-right-color: #dadde5; }
.grid tbody .sel { border-bottom: 1px solid #dadde5; }
.grid th.corner { background: var(--bar); border-color: var(--bar); padding: 3px 3px 0 0; }
.corner svg { margin-left: auto; }
.grid th.afterhidden { background: linear-gradient(90deg, transparent, #a7b1c9) 0 2px / 100% 1px no-repeat, linear-gradient(90deg, transparent, #a7b1c9) 0 100% / 100% 1px no-repeat var(--bar); }
.grid td { font-size: 19px; line-height: 28px; font-weight: 300; color: #000; }
.grid .title, .tall td:nth-child(-n+5) { border-color: #a6a8ba; }
.grid .tall td:nth-child(-n+5) { padding-top: 1px; background: #d9d9d9; }
.grid .title { line-height: 26px; padding: 1px 0 0 1px; }

.selection { position: absolute; left: 30px; top: 17px; width: 766px; height: 476px; border: 3px solid var(--green); box-shadow: inset 0 0 0 1px #fff; }
.handle { position: absolute; right: -4px; bottom: -4px; width: 7px; height: 7px; border: solid #fff; border-width: 1px 0 0 1px; background: var(--green); }
.unhide { position: absolute; left: 1px; top: 603px; width: 9px; height: 15px; border: 1px solid #cfd4de; border-radius: 2px; background: #fff; }
.pointer { position: absolute; left: 785px; top: 452px; }

.vscroll { width: 16px; flex: none; display: flex; flex-direction: column; padding: 0 0 0 3px; }
.split { flex: none; width: 10px; height: 4px; margin: 4px 0 6px 1px; border: solid #9aa4ba; border-width: 1px 0; }
.vtrack { flex: 1; display: flex; flex-direction: column; align-items: center; padding: 7px 1px; background: #e8eaef; }
.up { transform: rotate(180deg); }
.vthumb { width: 11px; height: 298px; margin-top: 10px; border-radius: 6px; background: #d4d7df; }
.down { margin-top: auto; }

.sheetbar { display: flex; flex: none; align-items: center; height: 24px; border: solid var(--line); border-width: 1px 0; }
.sheetnav { display: flex; align-items: center; justify-content: space-between; width: 88px; margin: 0 17px 0 13px; color: #a3a9b5; }
.sheettab { width: 74px; height: 22px; border: solid var(--line); border-width: 0 1px; background: #fff; color: var(--green); font-weight: 700; }
.addsheet { margin-left: 4px; }
.grip { width: 4px; height: 10px; margin-left: auto; border: solid #8d97ad; border-width: 0 1px; }
.htrack { display: flex; align-items: center; width: 740px; height: 15px; margin: 0 19px 0 6px; padding: 0 3px; background: #e8eaef; }
.hthumb { width: 624px; height: 13px; margin-left: 9px; border-radius: 6px; background: #d4d7df; }
.lft { transform: rotate(90deg); }
.rgt { transform: rotate(-90deg); margin-left: auto; }

.side { width: 46px; flex: none; display: flex; flex-direction: column; align-items: center; border-left: 2px solid var(--line); padding-top: 11px; }
.sgrip { width: 20px; height: 4px; margin-bottom: 11px; border: solid #c9ced8; border-width: 1px 0; }
.side button { width: 36px; height: 36px; flex: none; }
.side .blue { color: var(--slate); }
.side .dim { color: #949caf; }
.side .sidemore { width: 38px; height: 44px; margin-top: auto; padding-top: 2px; border-top: 1px solid var(--line); }

/* status bar */
.status { display: flex; flex: none; align-items: center; height: 22px; padding: 4px 0 0 13px; background: var(--bar); }
.status .vline { height: 14px; }
.macro { margin-right: 14px; }
.stats { display: flex; gap: 10px; margin: 0 0 0 9px; font-family: "Open Sans", "Noto Sans CJK SC", sans-serif; }
.views { display: flex; align-items: center; margin-left: auto; padding-right: 63px; }
.cross { gap: 3px; margin: 0 14px 0 6px; }
.view { width: 22px; height: 20px; margin-right: 4px; }
.view.on { margin-left: 10px; background: #d9dde4; }
.view + .vline { margin-left: 7px; }
.pct { gap: 5px; margin-left: 10px; }
.minus { width: 10px; height: 12px; margin: 0 11px 0 12px; }
.minus span { width: 10px; height: 2px; background: var(--ink); }
.zoom { width: 140px; height: 14px; appearance: none; background: linear-gradient(90deg, #47516b 50%, #cdd2dc 50%) 0 50% / 100% 1px no-repeat; }
.zoom::-webkit-slider-thumb { appearance: none; width: 13px; height: 13px; border: 1px solid #3d465c; border-radius: 50%; background: #f5f5f5; }

/* floating items */
.watermark { position: absolute; right: 11px; bottom: 8px; z-index: 3; display: flex; align-items: center; opacity: .85; pointer-events: none; }
.wtext { display: flex; flex-direction: column; }
.wtext strong { font: 500 21px/26px "Noto Sans CJK SC", sans-serif; color: #4b93da; }
.wtext span { font: 17px/18px "Liberation Sans", sans-serif; color: #5cc67c; }
.ime { position: absolute; right: 3px; bottom: 0; z-index: 2; display: flex; align-items: center; justify-content: center; gap: 3px; width: 60px; height: 24px; border-radius: 5px; background: #fff; box-shadow: 0 0 3px #444; font-size: 13px; color: #222; }
```
